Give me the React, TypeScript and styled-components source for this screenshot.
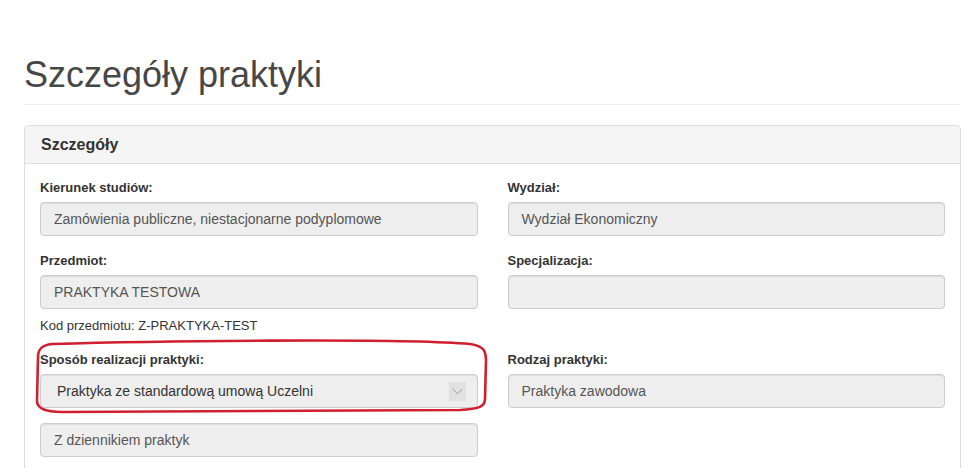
import React from "react";
import styled, { createGlobalStyle } from "styled-components";

const Global = createGlobalStyle`
  html, body { margin: 0; padding: 0; background: #fff; }
  body {
    font-family: "Liberation Sans", Arial, Helvetica, sans-serif;
    color: #333;
    overflow: hidden;
    height: 468px;
  }
  * { box-sizing: border-box; }
`;

const Page = styled.div`
  padding: 0 11px 0 24px;
`;

const PageHeader = styled.div`
  margin-top: 55px;
  padding-bottom: 9px;
  border-bottom: 1px solid #eee;
  margin-bottom: 20px;
`;

const Title = styled.h1`
  margin: 0;
  font-size: 36px;
  line-height: 40px;
  font-weight: 400;
  color: #474747;
`;

const Panel = styled.section`
  border: 1px solid #ddd;
  border-radius: 4px;
  background: #fff;
  box-shadow: 0 1px 1px rgba(0, 0, 0, 0.05);
`;

const PanelHeading = styled.div`
  background: #f5f5f5;
  border-bottom: 1px solid #ddd;
  border-radius: 3px 3px 0 0;
  padding: 10px 15px 10px 16px;
  height: 38px;
`;

const PanelTitle = styled.h3`
  margin: 0;
  font-size: 16px;
  line-height: 18px;
  font-weight: 700;
  color: #333;
`;

const PanelBody = styled.div`
  padding: 15px 15px 40px;
`;

const Row = styled.div`
  display: grid;
  grid-template-columns: 1fr 1fr;
  column-gap: 30px;
`;

const Group = styled.div`
  position: relative;
  margin-bottom: 16px;
`;

const Label = styled.label`
  display: block;
  font-size: 13px;
  line-height: 18px;
  font-weight: 700;
  color: #333;
  margin-bottom: 5px;
`;

const Field = styled.div<{ $spaced?: boolean }>`
  height: 34px;
  padding: 0 12px 0 13px;
  display: flex;
  align-items: center;
  font-size: 14px;
  color: #555;
  background: #eee;
  border: 1px solid #ccc;
  border-radius: 4px;
  box-shadow: inset 0 1px 1px rgba(0, 0, 0, 0.075);
  margin-top: ${(p) => (p.$spaced ? "15px" : "0")};
  white-space: nowrap;
`;

const SelectField = styled(Field)`
  padding: 0 12px 0 16px;
  justify-content: space-between;
  color: #333;
`;

const Chevron = styled.span`
  width: 17px;
  height: 19px;
  background: #e1e1e1;
  display: flex;
  align-items: center;
  justify-content: center;
  margin-right: -1px;
`;

const Help = styled.div`
  margin-top: 8px;
  font-size: 13px;
  line-height: 18px;
  color: #333;
`;

const Mark = styled.svg`
  position: absolute;
  left: -10px;
  top: -17px;
  width: 465px;
  height: 85px;
  overflow: visible;
  pointer-events: none;
`;

export default function App() {
  return (
    <>
      <Global />
      <Page>
        <PageHeader>
          <Title>Szczegóły praktyki</Title>
        </PageHeader>
        <Panel>
          <PanelHeading>
            <PanelTitle>Szczegóły</PanelTitle>
          </PanelHeading>
          <PanelBody>
            <Row>
              <Group>
                <Label>Kierunek studiów:</Label>
                <Field>Zamówienia publiczne, niestacjonarne podyplomowe</Field>
              </Group>
              <Group>
                <Label>Wydział:</Label>
                <Field>Wydział Ekonomiczny</Field>
              </Group>
            </Row>
            <Row>
              <Group>
                <Label>Przedmiot:</Label>
                <Field>PRAKTYKA TESTOWA</Field>
                <Help>Kod przedmiotu: Z-PRAKTYKA-TEST</Help>
              </Group>
              <Group>
                <Label>Specjalizacja:</Label>
                <Field />
              </Group>
            </Row>
            <Row>
              <Group>
                <Label>Sposób realizacji praktyki:</Label>
                <SelectField>
                  <span>Praktyka ze standardową umową Uczelni</span>
                  <Chevron>
                    <svg width="11" height="7" viewBox="0 0 11 7">
                      <polyline
                        points="0.5,0.8 5.5,5.8 10.5,0.8"
                        fill="none"
                        stroke="#9a9a9a"
                        strokeWidth="1"
                      />
                    </svg>
                  </Chevron>
                </SelectField>
                <Field $spaced>Z dziennikiem praktyk</Field>
                <Mark viewBox="0 0 465 85">
                  <g transform="translate(-30,-335)">
                    <path
                      d="M 52 345 C 150 342, 400 339, 470 345 C 484 347, 486 352, 486 362 L 485 400 C 485 408, 478 410, 460 411 L 62 413 C 46 413, 37 410, 37 402 L 38 358 C 38 350, 42 346, 52 345 Z"
                      fill="none"
                      stroke="#d01f2e"
                      strokeWidth="2.6"
                    />
                  </g>
                </Mark>
              </Group>
              <Group>
                <Label>Rodzaj praktyki:</Label>
                <Field>Praktyka zawodowa</Field>
              </Group>
            </Row>
          </PanelBody>
        </Panel>
      </Page>
    </>
  );
}
